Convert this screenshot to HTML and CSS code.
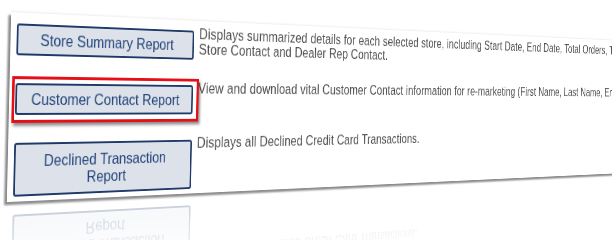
FILE: index.html
```html
<!DOCTYPE html>
<html>
<head>
<meta charset="utf-8">
<link rel="stylesheet" href="styles.css">
</head>
<body>
<div class="stage">
  <div class="card">
    <div class="row">
      <div class="btn">Store Summary Report</div>
      <p class="desc">Displays summarized details for each selected store, including Start Date, End Date, Total Orders, Total Sales,<br>Store Contact and Dealer Rep Contact.</p>
    </div>
    <div class="row">
      <div class="btn btn-marked">Customer Contact Report</div>
      <p class="desc">View and download vital Customer Contact information for re-marketing (First Name, Last Name, Email, Phone).</p>
    </div>
    <div class="row">
      <div class="btn btn-tall">Declined Transaction Report</div>
      <p class="desc">Displays all Declined Credit Card Transactions.</p>
    </div>
  </div>
</div>
</body>
</html>
```

FILE: styles.css
```css
html, body {
  margin: 0;
  padding: 0;
  background: #ffffff;
}

.stage {
  width: 612px;
  height: 240px;
  overflow: hidden;
  box-sizing: border-box;
  padding: 12px 0 0 9px;
  background: #ffffff;
  font-family: "Liberation Sans", Arial, sans-serif;
}

.card {
  width: 1000px;
  box-sizing: border-box;
  padding: 6px 0 5px 7px;
  background: #ffffff;
  display: flex;
  flex-direction: column;
  gap: 23px;
  box-shadow: -3px 3px 2px rgba(0, 0, 0, 0.45), 0 -1px 2px rgba(0, 0, 0, 0.08);
  transform-origin: left center;
  transform: perspective(1117px) rotateY(29deg) skewX(-1.5deg);
  -webkit-box-reflect: below 8px linear-gradient(to bottom, rgba(255,255,255,0) 62%, rgba(255,255,255,0.25) 100%);
}

.row {
  display: flex;
  align-items: flex-start;
}

.btn {
  position: relative;
  flex: none;
  width: 224px;
  box-sizing: border-box;
  margin-top: 5px;
  padding: 5px 8px;
  border: 2px solid #1f3a68;
  border-radius: 3px;
  background: #dde2ea;
  color: #23457a;
  font-size: 16.5px;
  line-height: 18px;
  text-align: center;
}

.btn-tall {
  padding: 7px 8px;
}

.btn-marked::after {
  content: "";
  position: absolute;
  top: -9px;
  bottom: -10px;
  left: -6px;
  right: -10px;
  border: 3px solid #e60f18;
  box-shadow: 2px 3px 3px rgba(0, 0, 0, 0.45);
}

.desc {
  margin: 0 0 0 7px;
  color: #505050;
  font-size: 16.7px;
  letter-spacing: 0.1px;
  line-height: 17px;
  white-space: nowrap;
}
```
